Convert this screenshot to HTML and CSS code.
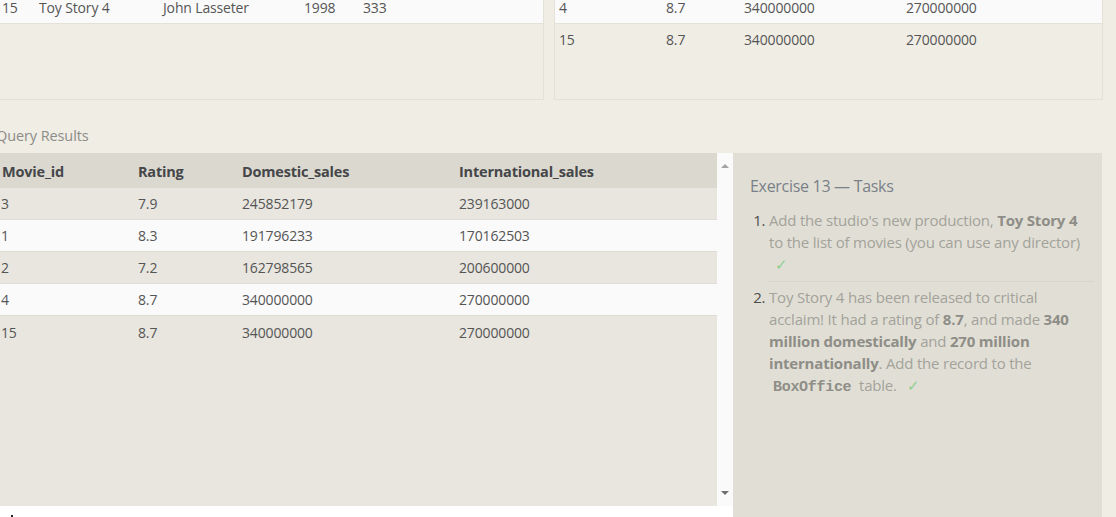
FILE: index.html
```html
<!DOCTYPE html>
<html>
<head>
<meta charset="utf-8">
<link rel="stylesheet" href="styles.css">
</head>
<body>
<div class="top">
  <div class="panel panel-left">
    <div class="row white">
      <span class="c l1">15</span><span class="c l2">Toy Story 4</span><span class="c l3">John Lasseter</span><span class="c l4">1998</span><span class="c l5">333</span>
    </div>
  </div>
  <div class="panel panel-right">
    <div class="row white">
      <span class="c r1">4</span><span class="c r2">8.7</span><span class="c r3">340000000</span><span class="c r4">270000000</span>
    </div>
    <div class="row cream">
      <span class="c r1">15</span><span class="c r2">8.7</span><span class="c r3">340000000</span><span class="c r4">270000000</span>
    </div>
  </div>
</div>

<div class="label">Query Results</div>

<div class="results">
  <div class="table-wrap">
    <div class="table">
      <div class="trow head">
        <span class="t1">Movie_id</span><span class="t2">Rating</span><span class="t3">Domestic_sales</span><span class="t4">International_sales</span>
      </div>
      <div class="trow odd"><span class="t1">3</span><span class="t2">7.9</span><span class="t3">245852179</span><span class="t4">239163000</span></div>
      <div class="trow even"><span class="t1">1</span><span class="t2">8.3</span><span class="t3">191796233</span><span class="t4">170162503</span></div>
      <div class="trow odd"><span class="t1">2</span><span class="t2">7.2</span><span class="t3">162798565</span><span class="t4">200600000</span></div>
      <div class="trow even"><span class="t1">4</span><span class="t2">8.7</span><span class="t3">340000000</span><span class="t4">270000000</span></div>
      <div class="trow odd last"><span class="t1">15</span><span class="t2">8.7</span><span class="t3">340000000</span><span class="t4">270000000</span></div>
    </div>
    <div class="scrollbar">
      <span class="arrow up"></span>
      <span class="arrow down"></span>
    </div>
  </div>
  <div class="tasks">
    <div class="tasks-title">Exercise 13 — Tasks</div>
    <ol class="task-list">
      <li>Add the studio's new production, <b>Toy Story 4</b> to the list of movies (you can use any director) <span class="check">✓</span></li>
      <li>Toy Story 4 has been released to critical acclaim! It had a rating of <b>8.7</b>, and made <b>340 million domestically</b> and <b>270 million internationally</b>. Add the record to the <code>BoxOffice</code> table. <span class="check">✓</span></li>
    </ol>
  </div>
</div>
<div class="dot"></div>
</body>
</html>
```

FILE: styles.css
```css
* { box-sizing: border-box; }
html, body {
  margin: 0;
  padding: 0;
  height: 517px;
  overflow: hidden;
}
body {
  background: #f0ede5;
  font-family: "Open Sans", "Noto Sans", sans-serif;
  font-size: 14px;
  color: #555;
  position: relative;
}
.top {
  display: flex;
  gap: 10px;
  height: 100px;
}
.panel {
  border: 1px solid #e4e1d9;
  border-top: none;
  background: #f0ede5;
}
.panel-left {
  width: 554px;
  margin-left: -10px;
}
.panel-right {
  width: 549px;
}
.row {
  display: flex;
  height: 24px;
  align-items: flex-start;
  line-height: 16px;
  color: #555;
  letter-spacing: -0.15px;
}
.row.white {
  background: #fafafa;
  border-bottom: 1px solid #e4e1d9;
}
.row.cream {
  padding-top: 8px;
  height: 32px;
}
.c { display: block; white-space: nowrap; }
.l1 { width: 48px; padding-left: 11px; }
.l2 { width: 124px; }
.l3 { width: 141px; }
.l4 { width: 59px; }
.l5 { width: 60px; }
.r1 { width: 111px; padding-left: 4px; }
.r2 { width: 78px; }
.r3 { width: 162px; }
.r4 { width: 120px; }

.label {
  margin: 26px 0 0 -4px;
  height: 27px;
  font-size: 14.5px;
  color: #8c8c88;
  letter-spacing: -0.1px;
}
.results {
  display: flex;
  height: 364px;
  margin-right: 14px;
}
.table-wrap {
  display: flex;
  align-items: flex-start;
  width: 733px;
  height: 364px;
  background: #fff;
}
.table {
  width: 717px;
  background: #e8e6df;
  height: 353px;
}
.trow {
  display: flex;
  height: 32px;
  align-items: center;
  letter-spacing: -0.15px;
  border-bottom: 1px solid #dedcd5;
}
.trow.last { border-bottom: none; }
.trow.head {
  height: 35px;
  background: #dbd9cf;
  font-weight: 700;
  font-size: 14.5px;
  color: #45464a;
  border-bottom: none;
  letter-spacing: -0.2px;
  padding-top: 1px;
}
.trow.odd { background: #e8e6df; }
.trow.even { background: #fafafa; }
.trow span { display: block; white-space: nowrap; }
.t1 { width: 138px; padding-left: 2px; }
.t2 { width: 104px; }
.t3 { width: 217px; }
.t4 { width: 200px; }
.trow:not(.head) .t1 { padding-left: 1px; }

.scrollbar {
  width: 16px;
  height: 353px;
  background: #fafafa;
  position: relative;
}
.arrow {
  position: absolute;
  left: 4px;
  width: 0;
  height: 0;
  border-left: 4px solid transparent;
  border-right: 4px solid transparent;
}
.arrow.up {
  top: 11px;
  border-bottom: 4px solid #a3a3a3;
}
.arrow.down {
  bottom: 11px;
  border-top: 4px solid #6e6e6e;
}
.tasks {
  width: 369px;
  background: #e1dfd5;
  padding: 22px 8px 0 17px;
  height: 380px;
}
.tasks-title {
  font-size: 16px;
  color: #7a7f89;
  letter-spacing: -0.3px;
  margin-bottom: 12px;
}
.task-list {
  margin: 0;
  padding-left: 19px;
  color: #a3a29b;
  font-size: 15px;
  line-height: 22px;
  letter-spacing: -0.2px;
}
.task-list li {
  padding-bottom: 6px;
  margin-bottom: 4px;
}
.task-list li:first-child {
  border-bottom: 1px solid #d6d4cb;
}
.task-list li::marker {
  color: #4d4d4d;
}
.task-list b {
  color: #8e8d87;
  font-weight: 700;
}
.task-list code {
  font-family: "Liberation Mono", "DejaVu Sans Mono", monospace;
  font-weight: 700;
  font-size: 15px;
  color: #8e8d87;
  padding: 0 4px;
  letter-spacing: -0.3px;
}
.check {
  color: #8fce8f;
  margin-left: 6px;
}
.dot {
  position: absolute;
  left: 11px;
  top: 515px;
  width: 2px;
  height: 2px;
  background: #222;
}
```
